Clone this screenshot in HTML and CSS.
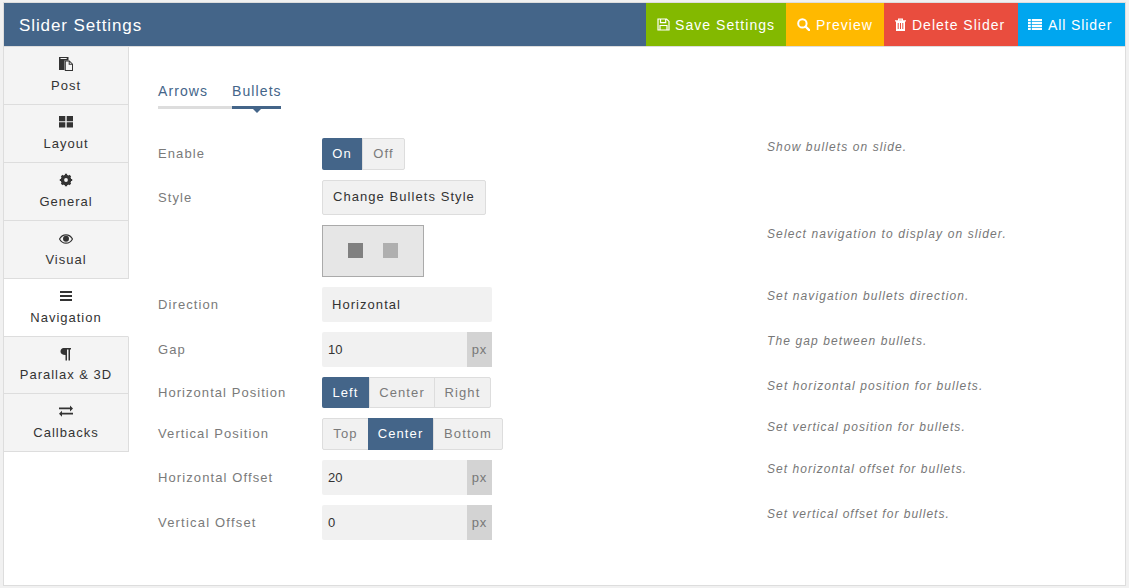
FILE: index.html
```html
<!DOCTYPE html>
<html lang="en">
<head>
<meta charset="utf-8">
<title>Slider Settings</title>
<link rel="stylesheet" href="styles.css">
</head>
<body>
<div class="panel">
  <header class="topbar">
    <h1 class="title">Slider Settings</h1>
    <nav class="actions">
      <a class="action save"><svg class="aicon" viewBox="0 0 13 13"><path d="M1 1h8.600L12 3.400V12H1z M3.500 1.500v3.200h5.200V1.500 M3 12V7.500h7V12" fill="none" stroke="#fff" stroke-width="1.200"/></svg>Save Settings</a>
      <a class="action preview"><svg class="aicon" viewBox="0 0 13 13"><circle cx="5.400" cy="5.400" r="4.200" fill="none" stroke="#fff" stroke-width="2"/><path d="M8.500 8.500l3.800 3.800" stroke="#fff" stroke-width="2.400" stroke-linecap="round"/></svg>Preview</a>
      <a class="action delete"><svg class="aicon narrow" viewBox="0 0 11 13"><path d="M0 2.200h3V.6h5v1.600h3v1.300h-1V13H1V3.500H0z M4.200 1.700v.5h2.600v-.5z" fill="#fff" fill-rule="evenodd"/><path d="M3.200 5v6M5.500 5v6M7.800 5v6" stroke="#e94d3e" stroke-width="1"/></svg>Delete Slider</a>
      <a class="action all"><svg class="aicon wide" viewBox="0 0 14 13"><path d="M0 1h2.800v2.300H0z M3.800 1H14v2.300H3.800z M0 4h2.800v2.200H0z M3.800 4H14v2.200H3.800z M0 6.900h2.800v2.200H0z M3.800 6.900H14v2.200H3.800z M0 9.800h2.800V12H0z M3.800 9.800H14V12H3.800z" fill="#fff"/></svg>All Slider</a>
    </nav>
  </header>
  <div class="body">
    <aside class="side">
      <a class="tab"><svg class="ticon" viewBox="0 0 14 14"><path d="M0 0h9.500v3.500H5.500V13H0z" fill="#333"/><path d="M1.500 1h6.200v1H1.500z" fill="#f4f4f4"/><path d="M5.800 3.500h4.700L14 7v7H5.800z" fill="#333"/><path d="M6.800 4.500h2.900v3.300H13V13H6.800z M10.700 5v1.800h2z" fill="#f4f4f4"/></svg><span>Post</span></a>
      <a class="tab"><svg class="ticon" viewBox="0 0 14 14"><path d="M0 1h6.300v5.200H0z M7.700 1H14v5.200H7.700z M0 7.300h6.300v5.200H0z M7.700 7.300H14v5.200H7.700z" fill="#333"/></svg><span>Layout</span></a>
      <a class="tab"><svg class="ticon" viewBox="0 0 14 14"><circle cx="7" cy="7" r="3.800" fill="none" stroke="#333" stroke-width="3"/><path d="M7 .8v12.400M.8 7h12.400M2.600 2.600l8.800 8.800M11.400 2.600l-8.800 8.800" stroke="#333" stroke-width="2.200"/><circle cx="7" cy="7" r="1.900" fill="#f4f4f4"/></svg><span>General</span></a>
      <a class="tab"><svg class="ticon" viewBox="0 -1 14 14"><path d="M.5 7C2 4.200 4.300 2.800 7 2.800S12 4.200 13.500 7C12 9.800 9.700 11.200 7 11.200S2 9.800 .5 7z" fill="none" stroke="#333" stroke-width="1.200"/><circle cx="7" cy="6.800" r="3" fill="#333"/></svg><span>Visual</span></a>
      <a class="tab current"><svg class="ticon" viewBox="0 0 14 14"><path d="M1 2h12v2H1z M1 6h12v2H1z M1 10h12v2H1z" fill="#333"/></svg><span>Navigation</span></a>
      <a class="tab"><svg class="ticon" viewBox="0 0 14 14"><path d="M4.500 1H12v1.500h-1V13.500H9.500V2.500H8V13.500H6.500V8C3.300 8 1.500 6.800 1.500 4.600S3 1 4.500 1z" fill="#333"/></svg><span>Parallax &amp; 3D</span></a>
      <a class="tab"><svg class="ticon" viewBox="0 0 14 14"><path d="M0 3.500h11V1.500L14 4.500 11 7.500V5.200H0z M14 8.800H3V6.800L0 9.800 3 12.800V10.500H14z" fill="#333"/></svg><span>Callbacks</span></a>
    </aside>
    <main class="content">
      <div class="subtabs">
        <a class="subtab">Arrows</a>
        <a class="subtab active">Bullets</a>
      </div>
      <div class="form">
        <div class="row r-enable"><label class="lab">Enable</label><div class="ctl"><div class="seg"><a class="opt on w40">On</a><a class="opt w42">Off</a></div></div><p class="hint">Show bullets on slide.</p></div>
        <div class="row r-style"><label class="lab">Style</label><div class="ctl"><a class="btn">Change Bullets Style</a></div></div>
        <div class="row r-preview"><span class="lab"></span><div class="ctl"><div class="bullets"><i class="dot"></i><i class="dot light"></i></div></div><p class="hint">Select navigation to display on slider.</p></div>
        <div class="row r-direction"><label class="lab">Direction</label><div class="ctl"><div class="select">Horizontal</div></div><p class="hint">Set navigation bullets direction.</p></div>
        <div class="row r-gap"><label class="lab">Gap</label><div class="ctl"><div class="input"><span class="val">10</span><span class="unit">px</span></div></div><p class="hint">The gap between bullets.</p></div>
        <div class="row r-hpos"><label class="lab">Horizontal Position</label><div class="ctl"><div class="seg"><a class="opt on w47">Left</a><a class="opt w65">Center</a><a class="opt w56">Right</a></div></div><p class="hint">Set horizontal position for bullets.</p></div>
        <div class="row r-vpos"><label class="lab">Vertical Position</label><div class="ctl"><div class="seg"><a class="opt w45">Top</a><a class="opt on w65">Center</a><a class="opt w69">Bottom</a></div></div><p class="hint">Set vertical position for bullets.</p></div>
        <div class="row r-hoff"><label class="lab">Horizontal Offset</label><div class="ctl"><div class="input"><span class="val">20</span><span class="unit">px</span></div></div><p class="hint">Set horizontal offset for bullets.</p></div>
        <div class="row r-voff"><label class="lab">Vertical Offset</label><div class="ctl"><div class="input"><span class="val">0</span><span class="unit">px</span></div></div><p class="hint">Set vertical offset for bullets.</p></div>
      </div>
    </main>
  </div>
</div>
</body>
</html>
```
FILE: styles.css
```css
* { box-sizing: border-box; }
html, body { height: 100%; }
body { margin: 0; background: #f1f1f1; padding: 2px 3px; font-family: "Liberation Sans", Arial, sans-serif; font-size: 13px; letter-spacing: 1.1px; color: #333; }
.panel { height: 584px; background: #fff; border: 1px solid #ddd; display: flex; flex-direction: column; }
.topbar { height: 44px; background: #446589; border-bottom: 1px solid #ddd; display: flex; justify-content: space-between; align-items: stretch; flex: none; }
.title { margin: 0; padding-left: 15px; font-size: 17px; font-weight: 400; line-height: 45px; color: #fff; letter-spacing: .9px; }
.actions { display: flex; }
.action { display: flex; align-items: center; padding-left: 11px; color: #fff; font-size: 14px; letter-spacing: 1px; }
.aicon { width: 13px; height: 13px; margin-right: 6px; flex: none; }
.aicon.narrow { width: 11px; }
.aicon.wide { width: 14px; }
.save { width: 140px; background: #83b900; letter-spacing: 1.06px; }
.save .aicon { margin-right: 5px; }
.preview { width: 98px; background: #ffb900; }
.delete { width: 134px; background: #e94d3e; }
.all { width: 107px; padding-left: 10px; background: #00a6ef; letter-spacing: .9px; }
.body { display: flex; flex: 1; min-height: 0; }
.side { width: 125px; flex: none; display: flex; flex-direction: column; align-self: flex-start; }
.tab { height: 58px; background: #f4f4f4; border-right: 1px solid #ddd; border-bottom: 1px solid #ddd; display: flex; flex-direction: column; align-items: center; padding-top: 10px; letter-spacing: 1px; color: #333; }
.tab:nth-child(6) { height: 57px; }
.tab:nth-child(6) span { margin-top: 6px; }
.tab.current { background: #fff; border-right-color: transparent; }
.ticon { width: 14px; height: 14px; flex: none; }
.tab span { margin-top: 7px; line-height: 16px; }
.content { flex: 1; padding: 36px 0 0 29px; min-width: 0; }
.subtabs { display: flex; }
.subtab { width: 74px; height: 26px; border-bottom: 3px solid #ddd; font-size: 14px; line-height: 17px; letter-spacing: 1.1px; color: #446589; position: relative; white-space: nowrap; }
.subtab.active { width: 49px; border-bottom-color: #446589; }
.subtab.active::after { content: ""; position: absolute; left: 50%; bottom: -7px; margin-left: -4px; border: 4px solid transparent; border-bottom: 0; border-top-color: #446589; }
.form { margin-top: 29px; }
.row { display: flex; align-items: flex-start; }
.lab { width: 164px; flex: none; color: #7a7a7a; line-height: 36px; }
.ctl { width: 445px; flex: none; }
.hint { margin: 1px 0 0; font-size: 12px; font-style: italic; color: #777; line-height: 16px; }
.seg { display: inline-flex; border-radius: 2px; border: 1px solid #ddd; background: #f1f1f1; height: 32px; }
.opt { line-height: 30px; text-align: center; color: #7a7a7a; border-left: 1px solid #ddd; }
.opt:first-child { border-left: 0; }
.opt.on { background: #446589; color: #fff; border-left: 0; margin: -1px 0; line-height: 32px; }
.opt.on:first-child { margin-left: -1px; border-radius: 2px 0 0 2px; }
.w40 { width: 40px; }
.w42 { width: 42px; }
.w45 { width: 45px; }
.w47 { width: 47px; }
.w56 { width: 56px; }
.w65 { width: 65px; }
.w69 { width: 69px; }
.btn { display: inline-block; height: 35px; padding: 0 10px; line-height: 32px; letter-spacing: 1.06px; background: #f1f1f1; border: 1px solid #ddd; border-radius: 2px; color: #333; }
.bullets { width: 102px; height: 52px; padding-bottom: 1px; background: #e6e6e6; border: 1px solid #aaa; display: flex; align-items: center; justify-content: center; gap: 20px; }
.dot { width: 15px; height: 15px; background: #808080; }
.dot.light { background: #afafaf; }
.select { width: 170px; height: 35px; padding-left: 10px; background: #f1f1f1; border-radius: 2px; line-height: 35px; letter-spacing: 1.05px; color: #333; }
.input { width: 170px; height: 35px; background: #f1f1f1; display: flex; justify-content: space-between; border-radius: 2px; line-height: 35px; }
.val { padding-left: 6px; letter-spacing: 0; color: #333; }
.unit { width: 25px; background: #d3d3d3; color: #777; letter-spacing: 1px; text-align: center; }
.r-enable { height: 42px; }
.r-enable .lab { line-height: 31px; }
.r-style { height: 45px; }
.r-style .lab { line-height: 35px; }
.r-preview { height: 62px; }
.r-direction { height: 45px; }
.r-gap { height: 45px; }
.r-hpos { height: 41px; }
.r-hpos .lab { line-height: 32px; letter-spacing: 1.05px; }
.r-hpos .seg { height: 31px; }
.r-hpos .opt { line-height: 30px; }
.r-hpos .opt.on { height: 31px; line-height: 31px; }
.r-vpos { height: 42px; }
.r-vpos .lab { line-height: 32px; }
.r-vpos .hint { letter-spacing: 1.06px; }
.r-hoff { height: 45px; }
.r-hoff .hint { letter-spacing: 1.04px; }
.r-voff { height: 35px; }
.r-voff .lab { letter-spacing: 1.2px; }
.r-voff .hint { letter-spacing: 1px; }
```
